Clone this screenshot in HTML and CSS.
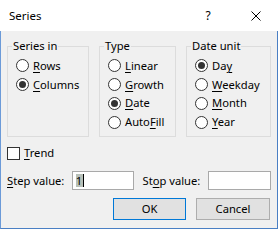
FILE: index.html
```html
<!DOCTYPE html>
<html>
<head>
<meta charset="utf-8">
<link rel="stylesheet" href="styles.css">
</head>
<body>
<div class="dialog">
  <div class="titlebar">
    <span class="title">Series</span>
    <span class="tbtn help">?</span>
    <span class="tbtn close"><svg width="10" height="10" viewBox="0 0 10 10"><path d="M0.5 0.5 L9.5 9.5 M9.5 0.5 L0.5 9.5" stroke="#000" stroke-width="1" fill="none"/></svg></span>
  </div>
  <div class="body">
    <div class="groups">
      <fieldset class="group g-series">
        <legend>Series in</legend>
        <div class="opts">
          <div class="opt"><span class="radio"></span><span class="lbl"><u>R</u>ows</span></div>
          <div class="opt"><span class="radio on"></span><span class="lbl"><u>C</u>olumns</span></div>
        </div>
      </fieldset>
      <fieldset class="group g-type">
        <legend>Type</legend>
        <div class="opts">
          <div class="opt"><span class="radio"></span><span class="lbl"><u>L</u>inear</span></div>
          <div class="opt"><span class="radio"></span><span class="lbl"><u>G</u>rowth</span></div>
          <div class="opt"><span class="radio on"></span><span class="lbl"><u>D</u>ate</span></div>
          <div class="opt"><span class="radio"></span><span class="lbl">Auto<u>F</u>ill</span></div>
        </div>
      </fieldset>
      <fieldset class="group g-date">
        <legend>Date unit</legend>
        <div class="opts">
          <div class="opt"><span class="radio on"></span><span class="lbl">Da<u>y</u></span></div>
          <div class="opt"><span class="radio"></span><span class="lbl"><u>W</u>eekday</span></div>
          <div class="opt"><span class="radio"></span><span class="lbl"><u>M</u>onth</span></div>
          <div class="opt"><span class="radio"></span><span class="lbl"><u>Y</u>ear</span></div>
        </div>
      </fieldset>
    </div>
    <div class="trend"><span class="check"></span><span class="lbl"><u>T</u>rend</span></div>
    <div class="values">
      <span class="vlabel step"><u>S</u>tep value:</span>
      <span class="field f-step"><span class="sel">1</span><span class="caret"></span></span>
      <span class="vlabel stop">St<u>o</u>p value:</span>
      <span class="field f-stop"></span>
    </div>
    <div class="buttons">
      <span class="btn ok">OK</span>
      <span class="btn cancel">Cancel</span>
    </div>
  </div>
</div>
</body>
</html>
```

FILE: styles.css
```css
html, body {
  margin: 0;
  padding: 0;
  background: #f0f0f0;
}
body {
  font-family: "Segoe UI", "Noto Sans", sans-serif;
  font-size: 11.2px;
  color: #000;
}
.dialog {
  width: 278px;
  height: 229px;
  display: flex;
  flex-direction: column;
  box-sizing: border-box;
}
.titlebar {
  height: 31px;
  background: #fff;
  display: flex;
  align-items: center;
  flex: none;
}
.title {
  flex: 1;
  padding-left: 9px;
  font-size: 11.5px;
  line-height: 16px;
}
.tbtn {
  width: 46px;
  height: 31px;
  display: flex;
  align-items: center;
  justify-content: center;
}
.help {
  font-size: 12px;
  padding-right: 1px;
}
.close svg {
  display: block;
  margin-left: 1px;
}
.body {
  flex: 1;
  border-left: 1px solid #6b9ad8;
  border-right: 1px solid #4a7fc4;
  border-bottom: 1px solid #4a7fc4;
  padding: 7px 6px 0 6px;
  display: flex;
  flex-direction: column;
}
.groups {
  display: flex;
  gap: 10px;
}
.group {
  margin: 0;
  padding: 0 0 0 8px;
  border: 1px solid #dcdcdc;
  height: 99px;
  box-sizing: border-box;
  min-width: 0;
}
.g-series { width: 82px; }
.g-type { width: 77px; }
.g-date { width: 85px; }
.group legend {
  padding: 0 1px;
  margin-left: -4px;
  line-height: 16px;
}
.opts {
  padding-top: 2.65px;
}
.opt {
  height: 18.7px;
  display: flex;
  align-items: center;
}
.radio {
  width: 13px;
  height: 13px;
  box-sizing: border-box;
  border: 1px solid #333;
  border-radius: 50%;
  background: #fff;
  position: relative;
  flex: none;
  margin-right: 4px;
}
.radio.on::after {
  content: "";
  position: absolute;
  left: 2px;
  top: 2px;
  width: 7px;
  height: 7px;
  border-radius: 50%;
  background: #333;
}
.lbl {
  line-height: 16px;
  white-space: nowrap;
}
u {
  text-underline-offset: 2px;
}
.trend {
  margin-top: 8px;
  height: 16px;
  display: flex;
  align-items: center;
}
.check {
  width: 13px;
  height: 13px;
  box-sizing: border-box;
  border: 1px solid #333;
  background: #fff;
  margin-right: 4px;
}
.values {
  margin-top: 10px;
  display: flex;
  align-items: center;
  height: 19px;
}
.vlabel {
  white-space: nowrap;
  line-height: 16px;
}
.step { width: 65px; }
.stop { width: 66px; margin-left: 9px; }
.field {
  height: 19px;
  box-sizing: border-box;
  border: 1px solid #a9a9a9;
  background: #fff;
  display: flex;
  align-items: center;
}
.f-step { width: 62px; padding-left: 3px; }
.f-stop { width: 63px; }
.sel {
  background: #b8c0b8;
  line-height: 13px;
  padding: 0 1px 0 0;
}
.caret {
  width: 1px;
  height: 13px;
  background: #000;
}
.buttons {
  margin-top: 8px;
  display: flex;
  justify-content: flex-end;
  gap: 10px;
  padding-right: 1px;
}
.btn {
  height: 22px;
  box-sizing: border-box;
  background: #e1e1e1;
  border: 1px solid #adadad;
  display: flex;
  align-items: center;
  justify-content: center;
  line-height: 16px;
}
.ok { width: 73px; border-color: #0078d7; }
.cancel { width: 74px; }
```
